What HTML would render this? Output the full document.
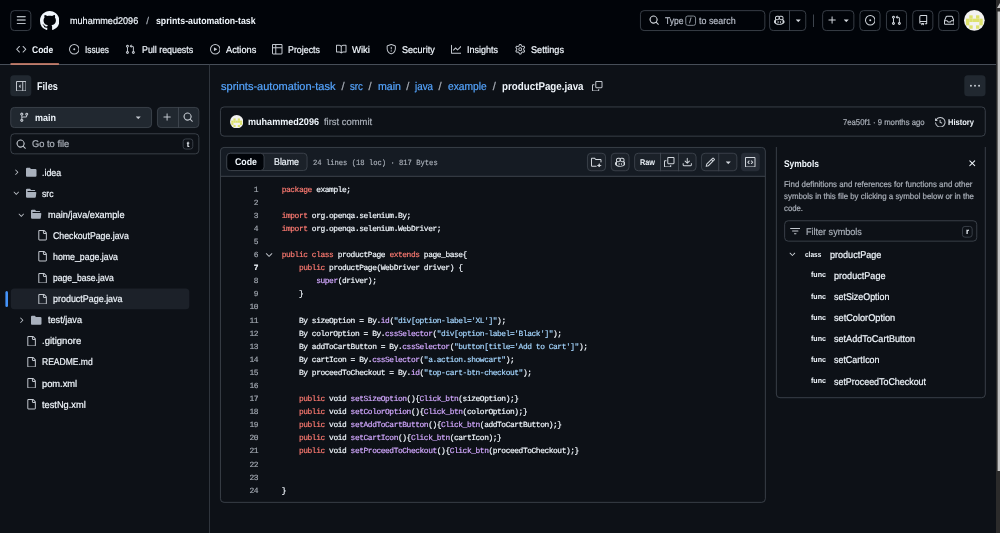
<!DOCTYPE html>
<html lang="en"><head><meta charset="utf-8"><title>sprints-automation-task/productPage.java</title>
<style>
html,body{margin:0;padding:0;background:#0d1117;}
body{width:1000px;height:533px;position:relative;overflow:hidden;font-family:"Liberation Sans", sans-serif;color:#f0f6fc;}
.i{position:absolute;display:block;}
.L{position:absolute;left:0;top:0;width:1000px;height:533px;will-change:transform;}
.t{position:absolute;white-space:pre;line-height:12px;transform-origin:0 0;text-rendering:geometricPrecision;font-family:"Liberation Sans", sans-serif;color:#f0f6fc;-webkit-text-stroke:0.2px;}
.w{-webkit-text-stroke:0;font-weight:700}
.m{font-family:"Liberation Mono", monospace;-webkit-text-stroke:0.18px;}
.k{color:#ff7b72}.e{color:#d2a8ff}.s{color:#a5d6ff}.c{color:#79c0ff}
</style></head>
<body>
<svg class="i" style="left:0;top:0" width="1000" height="533" viewBox="0 0 1000 533"><rect x="0" y="0" width="1000" height="64.5" fill="#010409"/><rect x="0" y="64" width="1000" height="1" fill="#474e58"/><rect x="10.75" y="10.65" width="20.1" height="19.9" fill="none" stroke="#3d444d" stroke-width="0.9" rx="3.6"/><rect x="640.45" y="10.65" width="124.4" height="19.9" fill="none" stroke="#3d444d" stroke-width="0.9" rx="3.6"/><rect x="685.75" y="16.05" width="9.8" height="9.3" fill="none" stroke="#9198a1" stroke-width="0.9" rx="2"/><rect x="769.65" y="10.65" width="36.1" height="19.9" fill="none" stroke="#3d444d" stroke-width="0.9" rx="3.6"/><rect x="789" y="10.2" width="1" height="20.8" fill="#3d444d"/><rect x="813" y="14.5" width="1" height="12.5" fill="#3d444d"/><rect x="822.65" y="10.65" width="31.2" height="19.9" fill="none" stroke="#3d444d" stroke-width="0.9" rx="3.6"/><rect x="859.95" y="10.65" width="20.1" height="19.9" fill="none" stroke="#3d444d" stroke-width="0.9" rx="3.6"/><rect x="886.45" y="10.65" width="20.1" height="19.9" fill="none" stroke="#3d444d" stroke-width="0.9" rx="3.6"/><rect x="912.75" y="10.65" width="20.1" height="19.9" fill="none" stroke="#3d444d" stroke-width="0.9" rx="3.6"/><rect x="938.75" y="10.65" width="20.1" height="19.9" fill="none" stroke="#3d444d" stroke-width="0.9" rx="3.6"/><rect x="10.3" y="63.3" width="48.9" height="1.4" fill="#e38d76" rx="0.7"/><rect x="209" y="64.8" width="1" height="468.2" fill="#2f353d"/><rect x="10.3" y="75.3" width="21.0" height="21.0" fill="#212830" rx="3.6"/><rect x="10.75" y="107.45" width="140.8" height="20.1" fill="#212830" stroke="#3d444d" stroke-width="0.9" rx="3.6"/><rect x="157.45" y="107.45" width="41.4" height="20.1" fill="#212830" stroke="#3d444d" stroke-width="0.9" rx="3.6"/><rect x="178" y="107" width="1" height="21" fill="#3d444d"/><rect x="10.75" y="133.75" width="188.1" height="20.1" fill="none" stroke="#3d444d" stroke-width="0.9" rx="3.6"/><rect x="183.15" y="138.95" width="9.6" height="10.1" fill="none" stroke="#3d444d" stroke-width="0.9" rx="2.5"/><rect x="10.8" y="288.48" width="178.5" height="20.8" fill="#1c2129" rx="3.6"/><rect x="5.4" y="290.88" width="2.6" height="16.0" fill="#4493f8" rx="1.5"/><rect x="964.3" y="75.3" width="21.2" height="21.0" fill="#212830" rx="3.6"/><rect x="220.45" y="106.95" width="764.8" height="29.2" fill="none" stroke="#3d444d" stroke-width="0.9" rx="3.6"/><path d="M220.4 176.3V151a3.6 3.6 0 0 1 3.6-3.6H761.8a3.6 3.6 0 0 1 3.6 3.6V176.3Z" fill="#151b23"/><rect x="220.45" y="147.45" width="544.9" height="354.9" fill="none" stroke="#3d444d" stroke-width="0.9" rx="3.6"/><rect x="220.5" y="175.8" width="544.8" height="1.0" fill="#3d444d"/><rect x="226.75" y="153.25" width="80.3" height="17.3" fill="#1b2129" stroke="#3d444d" stroke-width="0.9" rx="3.6"/><rect x="226.75" y="153.25" width="37.3" height="17.3" fill="#010409" stroke="#3d444d" stroke-width="0.9" rx="3.6"/><rect x="587.45" y="153.25" width="18.1" height="17.5" fill="#1b2129" stroke="#3d444d" stroke-width="0.9" rx="3.6"/><rect x="611.25" y="153.25" width="17.8" height="17.5" fill="#1b2129" stroke="#3d444d" stroke-width="0.9" rx="3.6"/><rect x="634.65" y="153.25" width="61.4" height="17.5" fill="#1b2129" stroke="#3d444d" stroke-width="0.9" rx="3.6"/><rect x="660" y="152.8" width="1" height="18.4" fill="#3d444d"/><rect x="678" y="152.8" width="1" height="18.4" fill="#3d444d"/><rect x="701.45" y="153.25" width="35.4" height="17.5" fill="#1b2129" stroke="#3d444d" stroke-width="0.9" rx="3.6"/><rect x="718.2" y="152.8" width="1.0" height="18.4" fill="#3d444d"/><rect x="741" y="152.8" width="18.8" height="18.4" fill="#262c36" rx="3.6"/><path d="M776.35 147V394.1a3.6 3.6 0 0 0 3.6 3.6H981.7a3.6 3.6 0 0 0 3.6-3.6V147" fill="none" stroke="#3d444d" stroke-width="0.9"/><rect x="784.65" y="220.75" width="192.1" height="20.4" fill="none" stroke="#3d444d" stroke-width="0.9" rx="3.6"/><rect x="962.45" y="226.45" width="9.7" height="10.7" fill="none" stroke="#3d444d" stroke-width="0.9" rx="2.5"/><rect x="996" y="0" width="4" height="533" fill="#2b2b2b"/><rect x="997.6" y="11.5" width="2.4" height="459.5" fill="#c4c4c4"/></svg>
<div class="L">
<header>
<svg class="i" style="left:15.55px;top:15.35px" width="10.5" height="10.5" viewBox="0 0 16 16"><path fill="#f0f6fc" d="M1 2.75A.75.75 0 0 1 1.75 2h12.5a.75.75 0 0 1 0 1.5H1.75A.75.75 0 0 1 1 2.75Zm0 5A.75.75 0 0 1 1.75 7h12.5a.75.75 0 0 1 0 1.5H1.75A.75.75 0 0 1 1 7.75ZM1.75 12h12.5a.75.75 0 0 1 0 1.5H1.75a.75.75 0 0 1 0-1.5Z"/></svg>
<svg class="i" style="left:39.9px;top:10.9px" width="19.4" height="19.4" viewBox="0 0 16 16"><path fill="#f0f6fc" d="M8 0c4.42 0 8 3.58 8 8a8.013 8.013 0 0 1-5.45 7.59c-.4.08-.55-.17-.55-.38 0-.27.01-1.13.01-2.2 0-.75-.25-1.23-.54-1.48 1.78-.2 3.65-.88 3.65-3.95 0-.88-.31-1.59-.82-2.15.08-.2.36-1.02-.08-2.12 0 0-.67-.22-2.2.82-.64-.18-1.32-.27-2-.27-.68 0-1.36.09-2 .27-1.53-1.03-2.2-.82-2.2-.82-.44 1.1-.16 1.92-.08 2.12-.51.56-.82 1.28-.82 2.15 0 3.06 1.86 3.75 3.64 3.95-.23.2-.44.55-.51 1.07-.46.21-1.61.55-2.33-.66-.15-.24-.6-.83-1.23-.82-.67.01-.27.38.01.53.34.19.73.9.82 1.13.16.45.68 1.31 2.69.94 0 .67.01 1.3.01 1.49 0 .21-.15.45-.55.38A7.995 7.995 0 0 1 0 8c0-4.42 3.58-8 8-8Z"/></svg>
<span class="t" style="top:16px;font-size:9.75px;left:69.8px;transform:scaleX(0.932);">muhammed2096</span>
<span class="t" style="top:16px;font-size:9.75px;color:#a9afb8;left:146.3px;">/</span>
<span class="t w" style="top:16px;font-size:9.75px;left:156px;transform:scaleX(0.896);">sprints-automation-task</span>
<svg class="i" style="left:649.45px;top:15.35px" width="10.5" height="10.5" viewBox="0 0 16 16"><path fill="#d3d8de" d="M10.68 11.74a6 6 0 0 1-7.922-8.982 6 6 0 0 1 8.982 7.922l3.04 3.04a.749.749 0 0 1-.326 1.275.749.749 0 0 1-.734-.215ZM11.5 7a4.499 4.499 0 1 0-8.997 0A4.499 4.499 0 0 0 11.5 7Z"/></svg>
<span class="t" style="top:16px;font-size:9.75px;color:#b7bdc8;left:664.6px;transform:scaleX(0.875);">Type</span>
<span class="t" style="top:15px;font-size:7.42px;color:#a9afb8;left:689.3px;">/</span>
<span class="t" style="top:16px;font-size:9.75px;color:#b7bdc8;left:698.8px;transform:scaleX(0.913);">to search</span>
<svg class="i" style="left:774.05px;top:15.35px" width="10.5" height="10.5" viewBox="0 0 16 16"><path fill="#d3d8de" d="M7.998 15.035c-4.562 0-7.873-2.914-7.998-3.749V9.338c.085-.628.677-1.686 1.588-2.065.013-.07.024-.143.036-.218.029-.183.06-.384.126-.612-.201-.508-.254-1.084-.254-1.656 0-.87.128-1.769.693-2.484.579-.733 1.494-1.124 2.724-1.261 1.206-.134 2.262.034 2.944.765.05.053.096.108.139.165.044-.057.094-.112.143-.165.682-.731 1.738-.899 2.944-.765 1.23.137 2.145.528 2.724 1.261.566.715.693 1.614.693 2.484 0 .572-.053 1.148-.254 1.656.066.228.098.429.126.612.012.076.024.148.037.218.924.385 1.522 1.471 1.591 2.095v1.872c0 .766-3.351 3.795-8.002 3.795Zm0-1.485c2.28 0 4.584-1.11 5.002-1.433V7.862l-.023-.116c-.49.21-1.075.291-1.727.291-1.146 0-2.059-.327-2.71-.991A3.222 3.222 0 0 1 8 6.303a3.24 3.24 0 0 1-.544.743c-.65.664-1.563.991-2.71.991-.652 0-1.236-.081-1.727-.291l-.023.116v4.255c.419.323 2.722 1.433 5.002 1.433ZM6.762 2.83c-.193-.206-.637-.413-1.682-.297-1.019.113-1.479.404-1.713.7-.247.312-.369.789-.369 1.554 0 .793.129 1.171.308 1.371.162.181.519.379 1.442.379.853 0 1.339-.235 1.638-.54.315-.322.527-.827.617-1.553.117-.935-.037-1.395-.241-1.614Zm4.155-.297c-1.044-.116-1.488.091-1.681.297-.204.219-.359.679-.242 1.614.091.726.303 1.231.618 1.553.299.305.784.54 1.638.54.922 0 1.28-.198 1.442-.379.179-.2.308-.578.308-1.371 0-.765-.123-1.242-.37-1.554-.233-.296-.693-.587-1.713-.7ZM6.25 9.037a.75.75 0 0 1 .75.75v1.501a.75.75 0 0 1-1.5 0V9.787a.75.75 0 0 1 .75-.75Zm4.25.75v1.501a.75.75 0 0 1-1.5 0V9.787a.75.75 0 0 1 1.5 0Z"/></svg>
<svg class="i" style="left:792.75px;top:15.35px" width="10.5" height="10.5" viewBox="0 0 16 16"><path fill="#d3d8de" d="m4.427 7.427 3.396 3.396a.25.25 0 0 0 .354 0l3.396-3.396A.25.25 0 0 0 11.396 7H4.604a.25.25 0 0 0-.177.427Z"/></svg>
<svg class="i" style="left:827.45px;top:15.35px" width="10.5" height="10.5" viewBox="0 0 16 16"><path fill="#d3d8de" d="M7.75 2a.75.75 0 0 1 .75.75V7h4.25a.75.75 0 0 1 0 1.500H8.500v4.25a.75.75 0 0 1-1.500 0V8.500H2.750a.75.75 0 0 1 0-1.500H7V2.750A.75.75 0 0 1 7.750 2Z"/></svg>
<svg class="i" style="left:840.55px;top:15.35px" width="10.5" height="10.5" viewBox="0 0 16 16"><path fill="#d3d8de" d="m4.427 7.427 3.396 3.396a.25.25 0 0 0 .354 0l3.396-3.396A.25.25 0 0 0 11.396 7H4.604a.25.25 0 0 0-.177.427Z"/></svg>
<svg class="i" style="left:864.75px;top:15.35px" width="10.5" height="10.5" viewBox="0 0 16 16"><path fill="#d3d8de" d="M8 9.5a1.5 1.5 0 1 0 0-3 1.5 1.5 0 0 0 0 3ZM8 0a8 8 0 1 1 0 16A8 8 0 0 1 8 0ZM1.5 8a6.5 6.5 0 1 0 13 0 6.5 6.5 0 0 0-13 0Z"/></svg>
<svg class="i" style="left:891.25px;top:15.35px" width="10.5" height="10.5" viewBox="0 0 16 16"><path fill="#d3d8de" d="M1.5 3.25a2.25 2.25 0 1 1 3 2.122v5.256a2.251 2.251 0 1 1-1.5 0V5.372A2.25 2.25 0 0 1 1.5 3.25Zm5.677-.177L9.573.677A.25.25 0 0 1 10 .854V2.5h1A2.5 2.5 0 0 1 13.5 5v5.628a2.251 2.251 0 1 1-1.5 0V5a1 1 0 0 0-1-1h-1v1.646a.25.25 0 0 1-.427.177L7.177 3.427a.25.25 0 0 1 0-.354ZM3.75 2.5a.75.75 0 1 0 0 1.5.75.75 0 0 0 0-1.5Zm0 9.5a.75.75 0 1 0 0 1.5.75.75 0 0 0 0-1.5Zm8.25.75a.75.75 0 1 0 1.5 0 .75.75 0 0 0-1.5 0Z"/></svg>
<svg class="i" style="left:917.55px;top:15.35px" width="10.5" height="10.5" viewBox="0 0 16 16"><path fill="#d3d8de" d="M2 2.5A2.5 2.5 0 0 1 4.500 0h8.750a.75.75 0 0 1 .75.75v12.500a.75.75 0 0 1-.75.75h-2.500a.75.75 0 0 1 0-1.500h1.750v-2h-8a1 1 0 0 0-.714 1.700.75.75 0 1 1-1.072 1.050A2.495 2.495 0 0 1 2 11.500Zm10.500-1h-8a1 1 0 0 0-1 1v6.708A2.486 2.486 0 0 1 4.500 9h8ZM5 12.250a.25.25 0 0 1 .25-.25h3.500a.25.25 0 0 1 .25.25v3.250a.25.25 0 0 1-.400.200l-1.450-1.087a.249.249 0 0 0-.300 0L5.400 15.700a.25.25 0 0 1-.400-.200Z"/></svg>
<svg class="i" style="left:943.55px;top:15.35px" width="10.5" height="10.5" viewBox="0 0 16 16"><path fill="#d3d8de" d="M2.8 2.06A1.75 1.75 0 0 1 4.41 1h7.18c.7 0 1.333.417 1.61 1.06l2.74 6.395c.04.093.06.194.06.295v4.5A1.75 1.75 0 0 1 14.25 15H1.75A1.75 1.75 0 0 1 0 13.250v-4.500c0-.101.02-.202.06-.295Zm1.61.44a.25.25 0 0 0-.23.152L1.887 8H4.750a.75.75 0 0 1 .6.3L6.625 10h2.750l1.275-1.700a.75.75 0 0 1 .6-.3h2.863L11.820 2.652a.25.25 0 0 0-.23-.152Zm10.090 7h-2.875l-1.275 1.700a.75.75 0 0 1-.6.300h-3.500a.75.75 0 0 1-.6-.300L4.375 9.500H1.500v3.750c0 .138.112.25.25.25h12.500a.25.25 0 0 0 .25-.25Z"/></svg>
<svg class="i" style="left:964.2px;top:10.2px" width="20.7" height="20.7" viewBox="0 0 21 21"><circle cx="10.5" cy="10.5" r="10.5" fill="#f2f2f0"/><g fill="#dde26c"><rect x="5.4" y="5.4" width="3.4" height="3.4"/><rect x="12.2" y="5.4" width="3.4" height="3.4"/><rect x="2.0" y="8.8" width="3.4" height="3.4"/><rect x="5.4" y="8.8" width="3.4" height="3.4"/><rect x="8.8" y="8.8" width="3.4" height="3.4"/><rect x="12.2" y="8.8" width="3.4" height="3.4"/><rect x="15.6" y="8.8" width="3.4" height="3.4"/><rect x="2.0" y="12.2" width="3.4" height="3.4"/><rect x="15.6" y="12.2" width="3.4" height="3.4"/><rect x="5.4" y="15.6" width="3.4" height="3.4"/><rect x="12.2" y="15.6" width="3.4" height="3.4"/></g></svg>
</header><nav>
<svg class="i" style="left:16px;top:44.45px" width="10.5" height="10.5" viewBox="0 0 16 16"><path fill="#c3c8cf" d="m11.28 3.22 4.25 4.25a.75.75 0 0 1 0 1.06l-4.25 4.25a.749.749 0 0 1-1.275-.326.749.749 0 0 1 .215-.734L13.94 8l-3.72-3.72a.749.749 0 0 1 .326-1.275.749.749 0 0 1 .734.215Zm-6.56 0a.751.751 0 0 1 1.042.018.751.751 0 0 1 .018 1.042L2.06 8l3.72 3.72a.749.749 0 0 1-.326 1.275.749.749 0 0 1-.734-.215L.47 8.53a.75.75 0 0 1 0-1.06Z"/></svg>
<span class="t w" style="top:45px;font-size:9.75px;left:32px;transform:scaleX(0.870);">Code</span>
<svg class="i" style="left:68.8px;top:44.45px" width="10.5" height="10.5" viewBox="0 0 16 16"><path fill="#c3c8cf" d="M8 9.5a1.5 1.5 0 1 0 0-3 1.5 1.5 0 0 0 0 3ZM8 0a8 8 0 1 1 0 16A8 8 0 0 1 8 0ZM1.5 8a6.5 6.5 0 1 0 13 0 6.5 6.5 0 0 0-13 0Z"/></svg>
<span class="t" style="top:45px;font-size:9.75px;left:85px;transform:scaleX(0.851);">Issues</span>
<svg class="i" style="left:125px;top:44.45px" width="10.5" height="10.5" viewBox="0 0 16 16"><path fill="#c3c8cf" d="M1.5 3.25a2.25 2.25 0 1 1 3 2.122v5.256a2.251 2.251 0 1 1-1.5 0V5.372A2.25 2.25 0 0 1 1.5 3.25Zm5.677-.177L9.573.677A.25.25 0 0 1 10 .854V2.5h1A2.5 2.5 0 0 1 13.5 5v5.628a2.251 2.251 0 1 1-1.5 0V5a1 1 0 0 0-1-1h-1v1.646a.25.25 0 0 1-.427.177L7.177 3.427a.25.25 0 0 1 0-.354ZM3.75 2.5a.75.75 0 1 0 0 1.5.75.75 0 0 0 0-1.5Zm0 9.5a.75.75 0 1 0 0 1.5.75.75 0 0 0 0-1.5Zm8.25.75a.75.75 0 1 0 1.5 0 .75.75 0 0 0-1.5 0Z"/></svg>
<span class="t" style="top:45px;font-size:9.75px;left:141.8px;transform:scaleX(0.908);">Pull requests</span>
<svg class="i" style="left:209.7px;top:44.45px" width="10.5" height="10.5" viewBox="0 0 16 16"><path fill="#c3c8cf" d="M8 0a8 8 0 1 1 0 16A8 8 0 0 1 8 0ZM1.5 8a6.5 6.5 0 1 0 13 0 6.5 6.5 0 0 0-13 0Zm4.879-2.773 4.264 2.559a.25.25 0 0 1 0 .428l-4.264 2.559A.25.25 0 0 1 6 10.559V5.442a.25.25 0 0 1 .379-.215Z"/></svg>
<span class="t" style="top:45px;font-size:9.75px;left:226px;transform:scaleX(0.947);">Actions</span>
<svg class="i" style="left:272px;top:44.45px" width="10.5" height="10.5" viewBox="0 0 16 16"><path fill="#c3c8cf" d="M0 1.75C0 .784.784 0 1.75 0h12.5C15.216 0 16 .784 16 1.75v12.5A1.75 1.75 0 0 1 14.25 16H1.75A1.75 1.75 0 0 1 0 14.25ZM6.5 6.5v8h7.75a.25.25 0 0 0 .25-.25V6.5Zm8-1.5V1.75a.25.25 0 0 0-.25-.25H6.5V5Zm-13 1.5v7.75c0 .138.112.25.25.25H5v-8ZM5 5V1.5H1.75a.25.25 0 0 0-.25.25V5Z"/></svg>
<span class="t" style="top:45px;font-size:9.75px;left:288.3px;transform:scaleX(0.908);">Projects</span>
<svg class="i" style="left:336px;top:44.45px" width="10.5" height="10.5" viewBox="0 0 16 16"><path fill="#c3c8cf" d="M0 1.75A.75.75 0 0 1 .75 1h4.253c1.227 0 2.317.59 3 1.501A3.743 3.743 0 0 1 11.006 1h4.245a.75.75 0 0 1 .75.75v10.5a.75.75 0 0 1-.75.75h-4.507a2.25 2.25 0 0 0-1.591.659l-.622.621a.75.75 0 0 1-1.06 0l-.622-.621A2.25 2.25 0 0 0 5.258 13H.75a.75.75 0 0 1-.75-.75Zm7.251 10.324.004-5.073-.002-2.253A2.25 2.25 0 0 0 5.003 2.5H1.5v9h3.757a3.75 3.75 0 0 1 1.994.574ZM8.755 4.75l-.004 7.322a3.752 3.752 0 0 1 1.992-.572H14.5v-9h-3.495a2.25 2.25 0 0 0-2.25 2.25Z"/></svg>
<span class="t" style="top:45px;font-size:9.75px;left:352.3px;transform:scaleX(0.977);">Wiki</span>
<svg class="i" style="left:386px;top:44.45px" width="10.5" height="10.5" viewBox="0 0 16 16"><path fill="#c3c8cf" d="M7.467.133a1.748 1.748 0 0 1 1.066 0l5.25 1.68A1.75 1.75 0 0 1 15 3.48V7c0 1.566-.32 3.182-1.303 4.682-.983 1.498-2.585 2.813-5.032 3.855a1.697 1.697 0 0 1-1.33 0c-2.447-1.042-4.049-2.357-5.032-3.855C1.32 10.182 1 8.566 1 7V3.48a1.75 1.75 0 0 1 1.217-1.667Zm.61 1.429a.25.25 0 0 0-.153 0l-5.25 1.68a.25.25 0 0 0-.174.238V7c0 1.358.275 2.666 1.057 3.86.784 1.194 2.121 2.34 4.366 3.297a.196.196 0 0 0 .154 0c2.245-.956 3.582-2.104 4.366-3.298C13.225 9.666 13.5 8.36 13.5 7V3.48a.251.251 0 0 0-.174-.237l-5.25-1.68ZM8.75 4.75v3a.75.75 0 0 1-1.5 0v-3a.75.75 0 0 1 1.5 0ZM9 10.5a1 1 0 1 1-2 0 1 1 0 0 1 2 0Z"/></svg>
<span class="t" style="top:45px;font-size:9.75px;left:402.3px;transform:scaleX(0.928);">Security</span>
<svg class="i" style="left:450.8px;top:44.45px" width="10.5" height="10.5" viewBox="0 0 16 16"><path fill="#c3c8cf" d="M1.5 1.75V13.5h13.75a.75.75 0 0 1 0 1.5H.75a.75.75 0 0 1-.75-.75V1.75a.75.75 0 0 1 1.5 0Zm14.28 2.53-5.25 5.25a.75.75 0 0 1-1.06 0L7 7.06 4.28 9.78a.751.751 0 0 1-1.042-.018.751.751 0 0 1-.018-1.042l3.25-3.25a.75.75 0 0 1 1.06 0L10 7.94l4.72-4.72a.751.751 0 0 1 1.042.018.751.751 0 0 1 .018 1.042Z"/></svg>
<span class="t" style="top:45px;font-size:9.75px;left:467.3px;transform:scaleX(0.922);">Insights</span>
<svg class="i" style="left:515px;top:44.45px" width="10.5" height="10.5" viewBox="0 0 16 16"><path fill="#c3c8cf" d="M8 0a8.2 8.2 0 0 1 .701.031C9.444.095 9.99.645 10.16 1.29l.288 1.107c.018.066.079.158.212.224.231.114.454.243.668.386.123.082.233.09.299.071l1.103-.303c.644-.176 1.392.021 1.82.63.27.385.506.792.704 1.218.315.675.111 1.422-.364 1.891l-.814.806c-.049.048-.098.147-.088.294.016.257.016.515 0 .772-.01.147.038.246.088.294l.814.806c.475.469.679 1.216.364 1.891a7.977 7.977 0 0 1-.704 1.217c-.428.61-1.176.807-1.82.63l-1.102-.302c-.067-.019-.177-.011-.3.071a5.909 5.909 0 0 1-.668.386c-.133.066-.194.158-.211.224l-.29 1.106c-.168.646-.715 1.196-1.458 1.26a8.006 8.006 0 0 1-1.402 0c-.743-.064-1.289-.614-1.458-1.26l-.289-1.106c-.018-.066-.079-.158-.212-.224a5.738 5.738 0 0 1-.668-.386c-.123-.082-.233-.09-.299-.071l-1.103.303c-.644.176-1.392-.021-1.82-.63a8.12 8.12 0 0 1-.704-1.218c-.315-.675-.111-1.422.363-1.891l.815-.806c.05-.048.098-.147.088-.294a6.214 6.214 0 0 1 0-.772c.01-.147-.038-.246-.088-.294l-.815-.806C.635 6.045.431 5.298.746 4.623a7.920 7.920 0 0 1 .704-1.217c.428-.61 1.176-.807 1.82-.63l1.102.302c.067.019.177.011.3-.071.214-.143.437-.272.668-.386.133-.066.194-.158.211-.224l.29-1.106C6.009.645 6.556.095 7.299.03 7.53.01 7.764 0 8 0Zm-.571 1.525c-.036.003-.108.036-.137.146l-.289 1.105c-.147.561-.549.967-.998 1.189-.173.086-.34.183-.5.29-.417.278-.97.423-1.529.27l-1.103-.303c-.109-.03-.175.016-.195.045-.22.312-.412.644-.573.99-.014.031-.021.11.059.19l.815.806c.411.406.562.957.53 1.456a4.709 4.709 0 0 0 0 .582c.032.499-.119 1.05-.53 1.456l-.815.806c-.081.08-.073.159-.059.19.162.346.353.677.573.989.02.03.085.076.195.046l1.102-.303c.56-.153 1.113-.008 1.53.27.161.107.328.204.501.29.447.222.85.629.997 1.189l.289 1.105c.029.109.101.143.137.146a6.600 6.600 0 0 0 1.142 0c.036-.003.108-.036.137-.146l.289-1.105c.147-.561.549-.967.998-1.189.173-.086.34-.183.5-.29.417-.278.97-.423 1.529-.27l1.103.303c.109.029.175-.016.195-.045.22-.313.411-.644.573-.99.014-.031.021-.11-.059-.19l-.815-.806c-.411-.406-.562-.957-.53-1.456a4.709 4.709 0 0 0 0-.582c-.032-.499.119-1.05.53-1.456l.815-.806c.081-.08.073-.159.059-.19a6.464 6.464 0 0 0-.573-.989c-.02-.03-.085-.076-.195-.046l-1.102.303c-.56.153-1.113.008-1.53-.27a4.440 4.440 0 0 0-.501-.29c-.447-.222-.85-.629-.997-1.189l-.289-1.105c-.029-.11-.101-.143-.137-.146a6.600 6.600 0 0 0-1.142 0ZM11 8a3 3 0 1 1-6 0 3 3 0 0 1 6 0ZM9.500 8a1.500 1.500 0 1 0-3.001.001A1.500 1.500 0 0 0 9.500 8Z"/></svg>
<span class="t" style="top:45px;font-size:9.75px;left:531px;transform:scaleX(0.937);">Settings</span>
</nav><aside>
<svg class="i" style="left:15.55px;top:80.55px" width="10.5" height="10.5" viewBox="0 0 16 16"><path fill="#c3c8cf" d="m4.177 7.823 2.396-2.396A.25.25 0 0 1 7 5.604v4.792a.25.25 0 0 1-.427.177L4.177 8.177a.25.25 0 0 1 0-.354ZM0 1.750C0 .784.784 0 1.750 0h12.500C15.216 0 16 .784 16 1.750v12.500A1.750 1.750 0 0 1 14.250 16H1.750A1.750 1.750 0 0 1 0 14.250Zm1.750-.250a.25.25 0 0 0-.250.250v12.500c0 .138.112.250.250.250H9.500v-13Zm12.500 13a.25.25 0 0 0 .250-.250V1.750a.25.25 0 0 0-.250-.250H11v13Z"/></svg>
<span class="t w" style="top:81px;font-size:11.13px;left:36.8px;transform:scaleX(0.820);">Files</span>
<svg class="i" style="left:18.55px;top:112.25px" width="10.5" height="10.5" viewBox="0 0 16 16"><path fill="#c3c8cf" d="M9.500 3.250a2.250 2.250 0 1 1 3 2.122V6A2.500 2.500 0 0 1 10 8.500H6a1 1 0 0 0-1 1v1.128a2.251 2.251 0 1 1-1.500 0V5.372a2.250 2.250 0 1 1 1.500 0v1.836A2.493 2.493 0 0 1 6 7h4a1 1 0 0 0 1-1v-.628A2.250 2.250 0 0 1 9.500 3.250Zm-6 0a.75.75 0 1 0 1.500 0 .75.75 0 0 0-1.500 0Zm8.250-.750a.75.75 0 1 0 0 1.500.75.75 0 0 0 0-1.500ZM4.250 12a.75.75 0 1 0 0 1.500.75.75 0 0 0 0-1.500Z"/></svg>
<span class="t w" style="top:113px;font-size:9.75px;left:34.5px;transform:scaleX(0.922);">main</span>
<svg class="i" style="left:132.95px;top:112.25px" width="10.5" height="10.5" viewBox="0 0 16 16"><path fill="#c3c8cf" d="m4.427 7.427 3.396 3.396a.25.25 0 0 0 .354 0l3.396-3.396A.25.25 0 0 0 11.396 7H4.604a.25.25 0 0 0-.177.427Z"/></svg>
<svg class="i" style="left:162.45px;top:112.25px" width="10.5" height="10.5" viewBox="0 0 16 16"><path fill="#c3c8cf" d="M7.75 2a.75.75 0 0 1 .75.75V7h4.25a.75.75 0 0 1 0 1.500H8.500v4.25a.75.75 0 0 1-1.500 0V8.500H2.750a.75.75 0 0 1 0-1.500H7V2.750A.75.75 0 0 1 7.750 2Z"/></svg>
<svg class="i" style="left:183.45px;top:112.25px" width="10.5" height="10.5" viewBox="0 0 16 16"><path fill="#c3c8cf" d="M10.68 11.74a6 6 0 0 1-7.922-8.982 6 6 0 0 1 8.982 7.922l3.04 3.04a.749.749 0 0 1-.326 1.275.749.749 0 0 1-.734-.215ZM11.5 7a4.499 4.499 0 1 0-8.997 0A4.499 4.499 0 0 0 11.5 7Z"/></svg>
<svg class="i" style="left:16.05px;top:138.55px" width="10.5" height="10.5" viewBox="0 0 16 16"><path fill="#c3c8cf" d="M10.68 11.74a6 6 0 0 1-7.922-8.982 6 6 0 0 1 8.982 7.922l3.04 3.04a.749.749 0 0 1-.326 1.275.749.749 0 0 1-.734-.215ZM11.5 7a4.499 4.499 0 1 0-8.997 0A4.499 4.499 0 0 0 11.5 7Z"/></svg>
<span class="t" style="top:139px;font-size:9.75px;color:#a9afb8;left:32px;transform:scaleX(0.956);">Go to file</span>
<span class="t w" style="top:139px;font-size:7.95px;left:186.8px;">t</span>
<svg class="i" style="left:26.2px;top:167.15px" width="10.5" height="10.5" viewBox="0 0 16 16"><path fill="#a9b1bd" d="M1.750 1A1.750 1.750 0 0 0 0 2.750v10.500C0 14.216.784 15 1.750 15h12.500A1.750 1.750 0 0 0 16 13.250v-8.500A1.750 1.750 0 0 0 14.250 3H7.500a.25.25 0 0 1-.200-.100l-.900-1.200C6.070 1.260 5.550 1 5 1H1.750Z"/></svg>
<svg class="i" style="left:11.9px;top:168.4px" width="8.6" height="8.6" viewBox="0 0 16 16"><path fill="#c3c8cf" d="M6.220 3.220a.75.75 0 0 1 1.060 0l4.250 4.250a.75.75 0 0 1 0 1.060l-4.250 4.250a.751.751 0 0 1-1.042-.018.751.751 0 0 1-.018-1.042L9.940 8 6.220 4.280a.75.75 0 0 1 0-1.060Z"/></svg>
<span class="t" style="top:168px;font-size:9.75px;left:41.8px;transform:scaleX(0.908);">.idea</span>
<svg class="i" style="left:26.2px;top:188.23px" width="10.5" height="10.5" viewBox="0 0 16 16"><path fill="#a9b1bd" d="M.513 1.513A1.750 1.750 0 0 1 1.750 1h3.500c.55 0 1.070.260 1.400.700l.900 1.200a.25.25 0 0 0 .200.100H13a1 1 0 0 1 1 1v.500H2.750a.75.75 0 0 0 0 1.500h11.978a1 1 0 0 1 .994 1.117L15 13.250A1.750 1.750 0 0 1 13.250 15H1.750A1.750 1.750 0 0 1 0 13.250V2.750c0-.464.184-.910.513-1.237Z"/></svg>
<svg class="i" style="left:11.9px;top:189.48px" width="8.6" height="8.6" viewBox="0 0 16 16"><path fill="#c3c8cf" d="M12.780 5.220a.749.749 0 0 1 0 1.060l-4.250 4.250a.749.749 0 0 1-1.060 0L3.220 6.280a.749.749 0 1 1 1.060-1.060L8 8.939l3.720-3.719a.749.749 0 0 1 1.060 0Z"/></svg>
<span class="t" style="top:189px;font-size:9.75px;left:41.8px;transform:scaleX(0.885);">src</span>
<svg class="i" style="left:31.3px;top:209.31px" width="10.5" height="10.5" viewBox="0 0 16 16"><path fill="#a9b1bd" d="M.513 1.513A1.750 1.750 0 0 1 1.750 1h3.500c.55 0 1.070.260 1.400.700l.900 1.200a.25.25 0 0 0 .200.100H13a1 1 0 0 1 1 1v.500H2.750a.75.75 0 0 0 0 1.500h11.978a1 1 0 0 1 .994 1.117L15 13.250A1.750 1.750 0 0 1 13.250 15H1.750A1.750 1.750 0 0 1 0 13.250V2.750c0-.464.184-.910.513-1.237Z"/></svg>
<svg class="i" style="left:17.3px;top:210.56px" width="8.6" height="8.6" viewBox="0 0 16 16"><path fill="#c3c8cf" d="M12.780 5.220a.749.749 0 0 1 0 1.060l-4.250 4.250a.749.749 0 0 1-1.060 0L3.220 6.280a.749.749 0 1 1 1.060-1.060L8 8.939l3.720-3.719a.749.749 0 0 1 1.060 0Z"/></svg>
<span class="t" style="top:210px;font-size:9.75px;left:47.5px;transform:scaleX(0.941);">main/java/example</span>
<svg class="i" style="left:37.0px;top:230.39px" width="10.5" height="10.5" viewBox="0 0 16 16"><path fill="#c3c8cf" d="M2 1.750C2 .784 2.784 0 3.750 0h6.586c.464 0 .909.184 1.237.513l2.914 2.914c.329.328.513.773.513 1.237v9.586A1.750 1.750 0 0 1 13.250 16h-9.500A1.750 1.750 0 0 1 2 14.250Zm1.750-.250a.25.25 0 0 0-.250.250v12.500c0 .138.112.250.250.250h9.500a.25.25 0 0 0 .250-.250V6h-2.750A1.750 1.750 0 0 1 9 4.250V1.500Zm6.750.062V4.250c0 .138.112.250.250.250h2.688l-.011-.013-2.914-2.914-.013-.011Z"/></svg>
<span class="t" style="top:231px;font-size:9.75px;left:52.5px;transform:scaleX(0.896);">CheckoutPage.java</span>
<svg class="i" style="left:37.0px;top:251.47px" width="10.5" height="10.5" viewBox="0 0 16 16"><path fill="#c3c8cf" d="M2 1.750C2 .784 2.784 0 3.750 0h6.586c.464 0 .909.184 1.237.513l2.914 2.914c.329.328.513.773.513 1.237v9.586A1.750 1.750 0 0 1 13.250 16h-9.500A1.750 1.750 0 0 1 2 14.250Zm1.750-.250a.25.25 0 0 0-.250.250v12.500c0 .138.112.250.250.250h9.500a.25.25 0 0 0 .250-.250V6h-2.750A1.750 1.750 0 0 1 9 4.250V1.500Zm6.750.062V4.250c0 .138.112.250.250.250h2.688l-.011-.013-2.914-2.914-.013-.011Z"/></svg>
<span class="t" style="top:252px;font-size:9.75px;left:52.5px;transform:scaleX(0.901);">home_page.java</span>
<svg class="i" style="left:37.0px;top:272.55px" width="10.5" height="10.5" viewBox="0 0 16 16"><path fill="#c3c8cf" d="M2 1.750C2 .784 2.784 0 3.750 0h6.586c.464 0 .909.184 1.237.513l2.914 2.914c.329.328.513.773.513 1.237v9.586A1.750 1.750 0 0 1 13.250 16h-9.500A1.750 1.750 0 0 1 2 14.250Zm1.750-.250a.25.25 0 0 0-.250.250v12.500c0 .138.112.250.250.250h9.500a.25.25 0 0 0 .250-.250V6h-2.750A1.750 1.750 0 0 1 9 4.250V1.500Zm6.750.062V4.250c0 .138.112.250.250.250h2.688l-.011-.013-2.914-2.914-.013-.011Z"/></svg>
<span class="t" style="top:273px;font-size:9.75px;left:52.5px;transform:scaleX(0.883);">page_base.java</span>
<svg class="i" style="left:37.0px;top:293.63px" width="10.5" height="10.5" viewBox="0 0 16 16"><path fill="#c3c8cf" d="M2 1.750C2 .784 2.784 0 3.750 0h6.586c.464 0 .909.184 1.237.513l2.914 2.914c.329.328.513.773.513 1.237v9.586A1.750 1.750 0 0 1 13.250 16h-9.500A1.750 1.750 0 0 1 2 14.250Zm1.750-.250a.25.25 0 0 0-.250.250v12.500c0 .138.112.250.250.250h9.500a.25.25 0 0 0 .250-.250V6h-2.750A1.750 1.750 0 0 1 9 4.250V1.500Zm6.750.062V4.250c0 .138.112.250.250.250h2.688l-.011-.013-2.914-2.914-.013-.011Z"/></svg>
<span class="t" style="top:294px;font-size:9.75px;left:52.5px;transform:scaleX(0.916);">productPage.java</span>
<svg class="i" style="left:31.3px;top:314.71px" width="10.5" height="10.5" viewBox="0 0 16 16"><path fill="#a9b1bd" d="M1.750 1A1.750 1.750 0 0 0 0 2.750v10.500C0 14.216.784 15 1.750 15h12.500A1.750 1.750 0 0 0 16 13.250v-8.500A1.750 1.750 0 0 0 14.250 3H7.500a.25.25 0 0 1-.200-.100l-.900-1.200C6.070 1.260 5.550 1 5 1H1.750Z"/></svg>
<svg class="i" style="left:17.3px;top:315.96px" width="8.6" height="8.6" viewBox="0 0 16 16"><path fill="#c3c8cf" d="M6.220 3.220a.75.75 0 0 1 1.060 0l4.250 4.250a.75.75 0 0 1 0 1.060l-4.250 4.250a.751.751 0 0 1-1.042-.018.751.751 0 0 1-.018-1.042L9.940 8 6.220 4.280a.75.75 0 0 1 0-1.060Z"/></svg>
<span class="t" style="top:315px;font-size:9.75px;left:47.5px;transform:scaleX(0.936);">test/java</span>
<svg class="i" style="left:25.8px;top:335.79px" width="10.5" height="10.5" viewBox="0 0 16 16"><path fill="#c3c8cf" d="M2 1.750C2 .784 2.784 0 3.750 0h6.586c.464 0 .909.184 1.237.513l2.914 2.914c.329.328.513.773.513 1.237v9.586A1.750 1.750 0 0 1 13.250 16h-9.500A1.750 1.750 0 0 1 2 14.250Zm1.750-.250a.25.25 0 0 0-.250.250v12.500c0 .138.112.250.250.250h9.500a.25.25 0 0 0 .250-.250V6h-2.750A1.750 1.750 0 0 1 9 4.250V1.500Zm6.750.062V4.250c0 .138.112.250.250.250h2.688l-.011-.013-2.914-2.914-.013-.011Z"/></svg>
<span class="t" style="top:336px;font-size:9.75px;left:41.8px;transform:scaleX(0.977);">.gitignore</span>
<svg class="i" style="left:25.8px;top:356.87px" width="10.5" height="10.5" viewBox="0 0 16 16"><path fill="#c3c8cf" d="M2 1.750C2 .784 2.784 0 3.750 0h6.586c.464 0 .909.184 1.237.513l2.914 2.914c.329.328.513.773.513 1.237v9.586A1.750 1.750 0 0 1 13.250 16h-9.500A1.750 1.750 0 0 1 2 14.250Zm1.750-.250a.25.25 0 0 0-.250.250v12.500c0 .138.112.250.250.250h9.500a.25.25 0 0 0 .250-.250V6h-2.750A1.750 1.750 0 0 1 9 4.250V1.500Zm6.750.062V4.250c0 .138.112.250.250.250h2.688l-.011-.013-2.914-2.914-.013-.011Z"/></svg>
<span class="t" style="top:357px;font-size:9.75px;left:41.8px;transform:scaleX(0.875);">README.md</span>
<svg class="i" style="left:25.8px;top:377.95px" width="10.5" height="10.5" viewBox="0 0 16 16"><path fill="#c3c8cf" d="M2 1.750C2 .784 2.784 0 3.750 0h6.586c.464 0 .909.184 1.237.513l2.914 2.914c.329.328.513.773.513 1.237v9.586A1.750 1.750 0 0 1 13.250 16h-9.500A1.750 1.750 0 0 1 2 14.250Zm1.750-.250a.25.25 0 0 0-.250.250v12.500c0 .138.112.250.250.250h9.500a.25.25 0 0 0 .250-.250V6h-2.750A1.750 1.750 0 0 1 9 4.250V1.500Zm6.750.062V4.250c0 .138.112.250.250.250h2.688l-.011-.013-2.914-2.914-.013-.011Z"/></svg>
<span class="t" style="top:379px;font-size:9.75px;left:41.8px;transform:scaleX(0.955);">pom.xml</span>
<svg class="i" style="left:25.8px;top:399.03px" width="10.5" height="10.5" viewBox="0 0 16 16"><path fill="#c3c8cf" d="M2 1.750C2 .784 2.784 0 3.750 0h6.586c.464 0 .909.184 1.237.513l2.914 2.914c.329.328.513.773.513 1.237v9.586A1.750 1.750 0 0 1 13.250 16h-9.500A1.750 1.750 0 0 1 2 14.250Zm1.750-.250a.25.25 0 0 0-.250.250v12.500c0 .138.112.250.250.250h9.500a.25.25 0 0 0 .250-.250V6h-2.750A1.750 1.750 0 0 1 9 4.250V1.500Zm6.750.062V4.250c0 .138.112.250.250.250h2.688l-.011-.013-2.914-2.914-.013-.011Z"/></svg>
<span class="t" style="top:400px;font-size:9.75px;left:41.8px;transform:scaleX(0.949);">testNg.xml</span>
</aside><main>
<span class="t" style="top:81px;font-size:11.13px;color:#55a5ff;left:220.5px;transform:scaleX(0.990);">sprints-automation-task</span>
<span class="t" style="top:81px;font-size:11.13px;color:#a9afb8;left:341.5px;">/</span>
<span class="t" style="top:81px;font-size:11.13px;color:#55a5ff;left:349.8px;transform:scaleX(0.876);">src</span>
<span class="t" style="top:81px;font-size:11.13px;color:#a9afb8;left:368.6px;">/</span>
<span class="t" style="top:81px;font-size:11.13px;color:#55a5ff;left:377.5px;transform:scaleX(0.953);">main</span>
<span class="t" style="top:81px;font-size:11.13px;color:#a9afb8;left:406.2px;">/</span>
<span class="t" style="top:81px;font-size:11.13px;color:#55a5ff;left:414.5px;transform:scaleX(0.881);">java</span>
<span class="t" style="top:81px;font-size:11.13px;color:#a9afb8;left:438.6px;">/</span>
<span class="t" style="top:81px;font-size:11.13px;color:#55a5ff;left:447.5px;transform:scaleX(0.922);">example</span>
<span class="t" style="top:81px;font-size:11.13px;color:#a9afb8;left:492.7px;">/</span>
<span class="t w" style="top:81px;font-size:11.13px;left:501.5px;transform:scaleX(0.879);">productPage.java</span>
<svg class="i" style="left:592px;top:80.9px" width="10.5" height="10.5" viewBox="0 0 16 16"><path fill="#c3c8cf" d="M0 6.750C0 5.784.784 5 1.750 5h1.500a.75.75 0 0 1 0 1.500h-1.500a.25.25 0 0 0-.250.250v7.500c0 .138.112.250.250.250h7.500a.25.25 0 0 0 .250-.250v-1.500a.75.75 0 0 1 1.500 0v1.500A1.750 1.750 0 0 1 9.250 16h-7.500A1.750 1.750 0 0 1 0 14.250ZM5 1.750C5 .784 5.784 0 6.750 0h7.500C15.216 0 16 .784 16 1.750v7.500A1.750 1.750 0 0 1 14.250 11h-7.500A1.750 1.750 0 0 1 5 9.250Zm1.750-.250a.25.25 0 0 0-.250.250v7.500c0 .138.112.250.250.250h7.500a.25.25 0 0 0 .250-.250v-7.500a.25.25 0 0 0-.250-.250Z"/></svg>
<svg class="i" style="left:969.9px;top:80.8px" width="10" height="10" viewBox="0 0 16 16"><path fill="#d0d5db" d="M8 9a1.500 1.500 0 1 0 0-3 1.500 1.500 0 0 0 0 3ZM1.500 9a1.500 1.500 0 1 0 0-3 1.500 1.500 0 0 0 0 3Zm13 0a1.500 1.500 0 1 0 0-3 1.500 1.500 0 0 0 0 3Z"/></svg>
<svg class="i" style="left:230px;top:114.8px" width="13.4" height="13.4" viewBox="0 0 21 21"><circle cx="10.5" cy="10.5" r="10.5" fill="#f2f2f0"/><g fill="#dde26c"><rect x="5.4" y="5.4" width="3.4" height="3.4"/><rect x="12.2" y="5.4" width="3.4" height="3.4"/><rect x="2.0" y="8.8" width="3.4" height="3.4"/><rect x="5.4" y="8.8" width="3.4" height="3.4"/><rect x="8.8" y="8.8" width="3.4" height="3.4"/><rect x="12.2" y="8.8" width="3.4" height="3.4"/><rect x="15.6" y="8.8" width="3.4" height="3.4"/><rect x="2.0" y="12.2" width="3.4" height="3.4"/><rect x="15.6" y="12.2" width="3.4" height="3.4"/><rect x="5.4" y="15.6" width="3.4" height="3.4"/><rect x="12.2" y="15.6" width="3.4" height="3.4"/></g></svg>
<span class="t w" style="top:117px;font-size:9.75px;left:248px;transform:scaleX(0.929);">muhammed2096</span>
<span class="t" style="top:117px;font-size:9.75px;color:#a9afb8;left:324.3px;transform:scaleX(0.967);">first commit</span>
<span class="t" style="top:116px;font-size:8.37px;color:#a9afb8;left:842.5px;transform:scaleX(0.923);">7ea50f1 · 9 months ago</span>
<svg class="i" style="left:935px;top:116.7px" width="10.5" height="10.5" viewBox="0 0 16 16"><path fill="#c3c8cf" d="m.427 1.927 1.215 1.215a8.002 8.002 0 1 1-1.600 5.685.75.75 0 1 1 1.493-.154 6.500 6.500 0 1 0 1.180-4.458l1.358 1.358A.25.25 0 0 1 3.896 6H.250A.25.25 0 0 1 0 5.750V2.104a.25.25 0 0 1 .427-.177ZM7.750 4a.75.75 0 0 1 .750.750v2.992l2.028.812a.75.75 0 0 1-.557 1.392l-2.500-1A.751.751 0 0 1 7 8.250v-3.500A.75.75 0 0 1 7.750 4Z"/></svg>
<span class="t w" style="top:116px;font-size:8.37px;left:948px;transform:scaleX(0.902);">History</span>
<span class="t w" style="top:157px;font-size:9.75px;left:234.5px;transform:scaleX(0.903);">Code</span>
<span class="t" style="top:157px;font-size:9.75px;left:274.3px;transform:scaleX(0.904);">Blame</span>
<span class="t m" style="top:158px;font-size:7.9px;color:#a9afb8;left:313.3px;transform:scaleX(0.908);">24 lines (18 loc) · 817 Bytes</span>
<svg class="i" style="left:591.25px;top:156.75px" width="10.5" height="10.5" viewBox="0 0 16 16"><path fill="#d3d8de" d="M0 2.75C0 1.784.784 1 1.750 1H5c.550 0 1.070.260 1.400.700l.900 1.200a.25.25 0 0 0 .200.100h6.750c.966 0 1.750.784 1.750 1.750v3a.75.75 0 0 1-1.500 0v-3a.25.25 0 0 0-.250-.250H7.500a1.750 1.750 0 0 1-1.400-.700l-.900-1.200a.25.25 0 0 0-.200-.100H1.750a.25.25 0 0 0-.250.250v10.500c0 .138.112.250.250.250H8a.75.75 0 0 1 0 1.500H1.750A1.750 1.750 0 0 1 0 13.250ZM12.500 9.500c.2 0 .37.130.43.320l.42 1.330c.15.470.52.840.990.990l1.330.420a.45.45 0 0 1 0 .860l-1.330.420c-.470.150-.840.520-.990.990l-.420 1.330a.45.45 0 0 1-.860 0l-.420-1.330a1.520 1.520 0 0 0-.990-.990l-1.330-.420a.45.45 0 0 1 0-.860l1.330-.420c.470-.150.840-.520.990-.990l.420-1.330a.45.450 0 0 1 .430-.320Z"/></svg>
<svg class="i" style="left:614.85px;top:156.75px" width="10.5" height="10.5" viewBox="0 0 16 16"><path fill="#d3d8de" d="M7.998 15.035c-4.562 0-7.873-2.914-7.998-3.749V9.338c.085-.628.677-1.686 1.588-2.065.013-.07.024-.143.036-.218.029-.183.06-.384.126-.612-.201-.508-.254-1.084-.254-1.656 0-.87.128-1.769.693-2.484.579-.733 1.494-1.124 2.724-1.261 1.206-.134 2.262.034 2.944.765.05.053.096.108.139.165.044-.057.094-.112.143-.165.682-.731 1.738-.899 2.944-.765 1.23.137 2.145.528 2.724 1.261.566.715.693 1.614.693 2.484 0 .572-.053 1.148-.254 1.656.066.228.098.429.126.612.012.076.024.148.037.218.924.385 1.522 1.471 1.591 2.095v1.872c0 .766-3.351 3.795-8.002 3.795Zm0-1.485c2.28 0 4.584-1.11 5.002-1.433V7.862l-.023-.116c-.49.21-1.075.291-1.727.291-1.146 0-2.059-.327-2.71-.991A3.222 3.222 0 0 1 8 6.303a3.24 3.24 0 0 1-.544.743c-.65.664-1.563.991-2.71.991-.652 0-1.236-.081-1.727-.291l-.023.116v4.255c.419.323 2.722 1.433 5.002 1.433ZM6.762 2.83c-.193-.206-.637-.413-1.682-.297-1.019.113-1.479.404-1.713.7-.247.312-.369.789-.369 1.554 0 .793.129 1.171.308 1.371.162.181.519.379 1.442.379.853 0 1.339-.235 1.638-.54.315-.322.527-.827.617-1.553.117-.935-.037-1.395-.241-1.614Zm4.155-.297c-1.044-.116-1.488.091-1.681.297-.204.219-.359.679-.242 1.614.091.726.303 1.231.618 1.553.299.305.784.54 1.638.54.922 0 1.28-.198 1.442-.379.179-.2.308-.578.308-1.371 0-.765-.123-1.242-.37-1.554-.233-.296-.693-.587-1.713-.7ZM6.25 9.037a.75.75 0 0 1 .75.75v1.501a.75.75 0 0 1-1.5 0V9.787a.75.75 0 0 1 .75-.75Zm4.25.75v1.501a.75.75 0 0 1-1.5 0V9.787a.75.75 0 0 1 1.5 0Z"/></svg>
<span class="t w" style="top:156px;font-size:8.37px;left:640px;transform:scaleX(0.872);">Raw</span>
<svg class="i" style="left:664.25px;top:156.75px" width="10.5" height="10.5" viewBox="0 0 16 16"><path fill="#d3d8de" d="M0 6.750C0 5.784.784 5 1.750 5h1.500a.75.75 0 0 1 0 1.500h-1.500a.25.25 0 0 0-.250.250v7.500c0 .138.112.250.250.250h7.500a.25.25 0 0 0 .250-.250v-1.500a.75.75 0 0 1 1.500 0v1.500A1.750 1.750 0 0 1 9.250 16h-7.500A1.750 1.750 0 0 1 0 14.250ZM5 1.750C5 .784 5.784 0 6.750 0h7.500C15.216 0 16 .784 16 1.750v7.500A1.750 1.750 0 0 1 14.250 11h-7.500A1.750 1.750 0 0 1 5 9.250Zm1.750-.250a.25.25 0 0 0-.250.250v7.500c0 .138.112.250.250.250h7.500a.25.25 0 0 0 .250-.250v-7.500a.25.25 0 0 0-.250-.250Z"/></svg>
<svg class="i" style="left:682.05px;top:156.75px" width="10.5" height="10.5" viewBox="0 0 16 16"><path fill="#d3d8de" d="M2.750 14A1.750 1.750 0 0 1 1 12.250v-2.500a.75.75 0 0 1 1.500 0v2.500c0 .138.112.250.250.250h10.500a.25.25 0 0 0 .250-.250v-2.500a.75.75 0 0 1 1.500 0v2.500A1.750 1.750 0 0 1 13.250 14ZM7.250 7.689V2a.75.75 0 0 1 1.500 0v5.689l1.970-1.969a.749.749 0 1 1 1.060 1.060l-3.250 3.250a.749.749 0 0 1-1.060 0L4.220 6.780a.749.749 0 1 1 1.060-1.060l1.970 1.969Z"/></svg>
<svg class="i" style="left:704.55px;top:156.75px" width="10.5" height="10.5" viewBox="0 0 16 16"><path fill="#d3d8de" d="M11.013 1.427a1.750 1.750 0 0 1 2.474 0l1.086 1.086a1.750 1.750 0 0 1 0 2.474l-8.610 8.610c-.210.210-.470.364-.756.445l-3.251.930a.75.75 0 0 1-.927-.928l.929-3.250c.081-.286.235-.547.445-.758l8.610-8.610Zm.176 4.823L9.750 4.810l-6.286 6.287a.253.253 0 0 0-.064.108l-.558 1.953 1.953-.558a.253.253 0 0 0 .108-.064Zm1.238-3.763a.25.25 0 0 0-.354 0L10.811 3.750l1.439 1.440 1.263-1.263a.25.25 0 0 0 0-.354Z"/></svg>
<svg class="i" style="left:722.75px;top:156.75px" width="10.5" height="10.5" viewBox="0 0 16 16"><path fill="#d3d8de" d="m4.427 7.427 3.396 3.396a.25.25 0 0 0 .354 0l3.396-3.396A.25.25 0 0 0 11.396 7H4.604a.25.25 0 0 0-.177.427Z"/></svg>
<svg class="i" style="left:745.15px;top:156.75px" width="10.5" height="10.5" viewBox="0 0 16 16"><path fill="#d3d8de" d="M0 1.750C0 .784.784 0 1.750 0h12.500C15.216 0 16 .784 16 1.750v12.500A1.750 1.750 0 0 1 14.250 16H1.750A1.750 1.750 0 0 1 0 14.250Zm1.750-.250a.25.25 0 0 0-.250.250v12.500c0 .138.112.250.250.250h12.500a.25.25 0 0 0 .250-.250V1.750a.25.25 0 0 0-.250-.250Zm7.470 3.970a.75.75 0 0 1 1.060 0l2 2a.75.75 0 0 1 0 1.060l-2 2a.749.749 0 0 1-1.275-.326.749.749 0 0 1 .215-.734L10.690 8 9.220 6.530a.75.75 0 0 1 0-1.060ZM6.780 6.530 5.310 8l1.470 1.470a.749.749 0 0 1-.326 1.275.749.749 0 0 1-.734-.215l-2-2a.75.75 0 0 1 0-1.060l2-2a.751.751 0 0 1 1.042.018.751.751 0 0 1 .018 1.042Z"/></svg>
<span class="t m" style="top:185px;font-size:7.9px;color:#a4aab3;right:742px;letter-spacing:-0.428px;">1</span>
<span class="t m" style="top:185px;font-size:7.9px;left:281.7px;letter-spacing:-0.428px;"><span class="k">package</span> example;</span>
<span class="t m" style="top:198px;font-size:7.9px;color:#a4aab3;right:742px;letter-spacing:-0.428px;">2</span>
<span class="t m" style="top:211px;font-size:7.9px;color:#a4aab3;right:742px;letter-spacing:-0.428px;">3</span>
<span class="t m" style="top:211px;font-size:7.9px;left:281.7px;letter-spacing:-0.428px;"><span class="k">import</span> org.openqa.selenium.By;</span>
<span class="t m" style="top:224px;font-size:7.9px;color:#a4aab3;right:742px;letter-spacing:-0.428px;">4</span>
<span class="t m" style="top:224px;font-size:7.9px;left:281.7px;letter-spacing:-0.428px;"><span class="k">import</span> org.openqa.selenium.WebDriver;</span>
<span class="t m" style="top:237px;font-size:7.9px;color:#a4aab3;right:742px;letter-spacing:-0.428px;">5</span>
<span class="t m" style="top:250px;font-size:7.9px;color:#a4aab3;right:742px;letter-spacing:-0.428px;">6</span>
<span class="t m" style="top:250px;font-size:7.9px;left:281.7px;letter-spacing:-0.428px;"><span class="k">public</span> <span class="k">class</span> productPage <span class="k">extends</span> page_base{</span>
<span class="t m w" style="top:263px;font-size:7.9px;right:742px;letter-spacing:-0.428px;">7</span>
<span class="t m" style="top:263px;font-size:7.9px;left:281.7px;letter-spacing:-0.428px;">    <span class="k">public</span> productPage(WebDriver driver) {</span>
<span class="t m" style="top:276px;font-size:7.9px;color:#a4aab3;right:742px;letter-spacing:-0.428px;">8</span>
<span class="t m" style="top:276px;font-size:7.9px;left:281.7px;letter-spacing:-0.428px;">        <span class="e">super</span>(driver);</span>
<span class="t m" style="top:289px;font-size:7.9px;color:#a4aab3;right:742px;letter-spacing:-0.428px;">9</span>
<span class="t m" style="top:289px;font-size:7.9px;left:281.7px;letter-spacing:-0.428px;">    }</span>
<span class="t m" style="top:302px;font-size:7.9px;color:#a4aab3;right:742px;letter-spacing:-0.428px;">10</span>
<span class="t m" style="top:316px;font-size:7.9px;color:#a4aab3;right:742px;letter-spacing:-0.428px;">11</span>
<span class="t m" style="top:316px;font-size:7.9px;left:281.7px;letter-spacing:-0.428px;">    By sizeOption = By.<span class="e">id</span>(<span class="s">"div[option-label='XL']"</span>);</span>
<span class="t m" style="top:329px;font-size:7.9px;color:#a4aab3;right:742px;letter-spacing:-0.428px;">12</span>
<span class="t m" style="top:329px;font-size:7.9px;left:281.7px;letter-spacing:-0.428px;">    By colorOption = By.<span class="e">cssSelector</span>(<span class="s">"div[option-label='Black']"</span>);</span>
<span class="t m" style="top:342px;font-size:7.9px;color:#a4aab3;right:742px;letter-spacing:-0.428px;">13</span>
<span class="t m" style="top:342px;font-size:7.9px;left:281.7px;letter-spacing:-0.428px;">    By addToCartButton = By.<span class="e">cssSelector</span>(<span class="s">"button[title='Add to Cart']"</span>);</span>
<span class="t m" style="top:355px;font-size:7.9px;color:#a4aab3;right:742px;letter-spacing:-0.428px;">14</span>
<span class="t m" style="top:355px;font-size:7.9px;left:281.7px;letter-spacing:-0.428px;">    By cartIcon = By.<span class="e">cssSelector</span>(<span class="s">"a.action.showcart"</span>);</span>
<span class="t m" style="top:368px;font-size:7.9px;color:#a4aab3;right:742px;letter-spacing:-0.428px;">15</span>
<span class="t m" style="top:368px;font-size:7.9px;left:281.7px;letter-spacing:-0.428px;">    By proceedToCheckout = By.<span class="e">id</span>(<span class="s">"top-cart-btn-checkout"</span>);</span>
<span class="t m" style="top:381px;font-size:7.9px;color:#a4aab3;right:742px;letter-spacing:-0.428px;">16</span>
<span class="t m" style="top:394px;font-size:7.9px;color:#a4aab3;right:742px;letter-spacing:-0.428px;">17</span>
<span class="t m" style="top:394px;font-size:7.9px;left:281.7px;letter-spacing:-0.428px;">    <span class="k">public</span> void <span class="e">setSizeOption</span>(){<span class="e">Click_btn</span>(sizeOption);}</span>
<span class="t m" style="top:407px;font-size:7.9px;color:#a4aab3;right:742px;letter-spacing:-0.428px;">18</span>
<span class="t m" style="top:407px;font-size:7.9px;left:281.7px;letter-spacing:-0.428px;">    <span class="k">public</span> void <span class="e">setColorOption</span>(){<span class="e">Click_btn</span>(colorOption);}</span>
<span class="t m" style="top:420px;font-size:7.9px;color:#a4aab3;right:742px;letter-spacing:-0.428px;">19</span>
<span class="t m" style="top:420px;font-size:7.9px;left:281.7px;letter-spacing:-0.428px;">    <span class="k">public</span> void <span class="e">setAddToCartButton</span>(){<span class="e">Click_btn</span>(addToCartButton);}</span>
<span class="t m" style="top:433px;font-size:7.9px;color:#a4aab3;right:742px;letter-spacing:-0.428px;">20</span>
<span class="t m" style="top:433px;font-size:7.9px;left:281.7px;letter-spacing:-0.428px;">    <span class="k">public</span> void <span class="e">setCartIcon</span>(){<span class="e">Click_btn</span>(cartIcon);}</span>
<span class="t m" style="top:446px;font-size:7.9px;color:#a4aab3;right:742px;letter-spacing:-0.428px;">21</span>
<span class="t m" style="top:446px;font-size:7.9px;left:281.7px;letter-spacing:-0.428px;">    <span class="k">public</span> void <span class="e">setProceedToCheckout</span>(){<span class="e">Click_btn</span>(proceedToCheckout);}</span>
<span class="t m" style="top:460px;font-size:7.9px;color:#a4aab3;right:742px;letter-spacing:-0.428px;">22</span>
<span class="t m" style="top:473px;font-size:7.9px;color:#a4aab3;right:742px;letter-spacing:-0.428px;">23</span>
<span class="t m" style="top:486px;font-size:7.9px;color:#a4aab3;right:742px;letter-spacing:-0.428px;">24</span>
<span class="t m" style="top:486px;font-size:7.9px;left:281.7px;letter-spacing:-0.428px;">}</span>
<svg class="i" style="left:263.7px;top:249.55px" width="10.2" height="10.2" viewBox="0 0 16 16"><path fill="#c0c5cc" d="M12.780 5.220a.749.749 0 0 1 0 1.060l-4.250 4.250a.749.749 0 0 1-1.060 0L3.220 6.280a.749.749 0 1 1 1.060-1.060L8 8.939l3.720-3.719a.749.749 0 0 1 1.060 0Z"/></svg>
</main><section>
<span class="t w" style="top:159px;font-size:9.75px;left:784.3px;transform:scaleX(0.861);">Symbols</span>
<svg class="i" style="left:966.75px;top:157.75px" width="10.5" height="10.5" viewBox="0 0 16 16"><path fill="#f0f6fc" d="M3.720 3.720a.75.75 0 0 1 1.060 0L8 6.940l3.220-3.220a.749.749 0 0 1 1.275.326.749.749 0 0 1-.215.734L9.060 8l3.220 3.220a.749.749 0 0 1-.326 1.275.749.749 0 0 1-.734-.215L8 9.060l-3.220 3.220a.751.751 0 0 1-1.042-.018.751.751 0 0 1-.018-1.042L6.940 8 3.720 4.780a.75.75 0 0 1 0-1.060Z"/></svg>
<span class="t" style="top:178px;font-size:8.37px;color:#a9afb8;left:784.3px;transform:scaleX(0.943);">Find definitions and references for functions and other</span>
<span class="t" style="top:190px;font-size:8.37px;color:#a9afb8;left:784.3px;transform:scaleX(0.944);">symbols in this file by clicking a symbol below or in the</span>
<span class="t" style="top:202px;font-size:8.37px;color:#a9afb8;left:784.3px;transform:scaleX(0.929);">code.</span>
<svg class="i" style="left:789.95px;top:225.75px" width="10.5" height="10.5" viewBox="0 0 16 16"><path fill="#c3c8cf" d="M.750 3h14.500a.75.75 0 0 1 0 1.500H.750a.75.75 0 0 1 0-1.500ZM3 7.750A.75.75 0 0 1 3.750 7h8.500a.75.75 0 0 1 0 1.500h-8.500A.75.75 0 0 1 3 7.750Zm3 4a.75.75 0 0 1 .750-.750h2.500a.75.75 0 0 1 0 1.500h-2.500a.75.75 0 0 1-.750-.750Z"/></svg>
<span class="t" style="top:227px;font-size:9.75px;color:#a9afb8;left:805.5px;transform:scaleX(0.928);">Filter symbols</span>
<span class="t w" style="top:226px;font-size:7.95px;left:966px;">r</span>
<svg class="i" style="left:787.6px;top:250.2px" width="8.8" height="8.8" viewBox="0 0 16 16"><path fill="#d3d8de" d="M12.780 5.220a.749.749 0 0 1 0 1.060l-4.250 4.250a.749.749 0 0 1-1.060 0L3.220 6.280a.749.749 0 1 1 1.060-1.060L8 8.939l3.720-3.719a.749.749 0 0 1 1.060 0Z"/></svg>
<span class="t w" style="top:249px;font-size:7.63px;left:805px;transform:scaleX(0.854);">class</span>
<span class="t" style="top:250px;font-size:9.75px;left:829.5px;transform:scaleX(0.928);">productPage</span>
<span class="t w" style="top:269px;font-size:7.63px;left:810.8px;transform:scaleX(0.931);">func</span>
<span class="t" style="top:271px;font-size:9.75px;left:833.8px;transform:scaleX(0.931);">productPage</span>
<span class="t w" style="top:291px;font-size:7.63px;left:810.8px;transform:scaleX(0.931);">func</span>
<span class="t" style="top:292px;font-size:9.75px;left:833.8px;transform:scaleX(0.914);">setSizeOption</span>
<span class="t w" style="top:312px;font-size:7.63px;left:810.8px;transform:scaleX(0.931);">func</span>
<span class="t" style="top:313px;font-size:9.75px;left:833.8px;transform:scaleX(0.941);">setColorOption</span>
<span class="t w" style="top:333px;font-size:7.63px;left:810.8px;transform:scaleX(0.931);">func</span>
<span class="t" style="top:334px;font-size:9.75px;left:833.8px;transform:scaleX(0.930);">setAddToCartButton</span>
<span class="t w" style="top:354px;font-size:7.63px;left:810.8px;transform:scaleX(0.931);">func</span>
<span class="t" style="top:355px;font-size:9.75px;left:833.8px;transform:scaleX(0.913);">setCartIcon</span>
<span class="t w" style="top:375px;font-size:7.63px;left:810.8px;transform:scaleX(0.931);">func</span>
<span class="t" style="top:377px;font-size:9.75px;left:833.8px;transform:scaleX(0.913);">setProceedToCheckout</span>
</section>
<svg class="i" style="left:996.5px;top:3px" width="6" height="5" viewBox="0 0 6 5"><path d="M0 5 3 0 6 5Z" fill="#c8c8c8"/></svg>
</div>
</body></html>
